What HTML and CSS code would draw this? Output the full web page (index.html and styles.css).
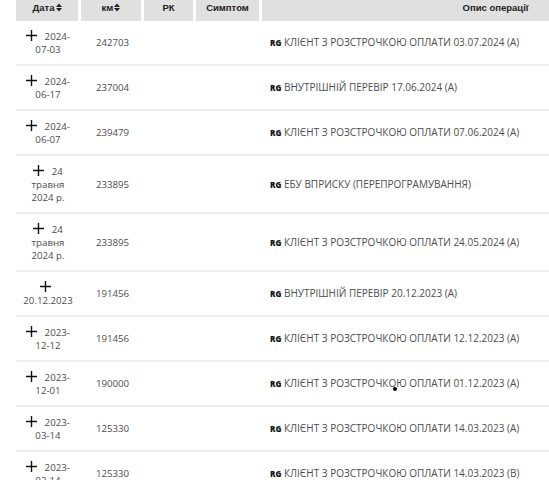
FILE: index.html
```html
<!DOCTYPE html>
<html lang="uk">
<head>
<meta charset="utf-8">
<link rel="stylesheet" href="styles.css">
</head>
<body>
<table class="log">
  <colgroup>
    <col class="w-date"><col class="w-km"><col class="w-rk"><col class="w-sym"><col class="w-desc">
  </colgroup>
  <thead>
    <tr>
      <th>Дата<svg class="sort" viewBox="0 0 6 9" width="6" height="9"><path d="M0 4 3 0.5 6 4Z M0 5 6 5 3 8.5Z"/></svg></th>
      <th>км<svg class="sort" viewBox="0 0 6 9" width="6" height="9"><path d="M0 4 3 0.5 6 4Z M0 5 6 5 3 8.5Z"/></svg></th>
      <th>РК</th>
      <th>Симптом</th>
      <th>Опис операції</th>
    </tr>
  </thead>
  <tbody>
    <tr>
      <td class="date"><svg class="plus" viewBox="0 0 11 11" width="11" height="11"><path d="M5.5 0V11M0 5.5H11"/></svg> 2024-<wbr>07-03</td>
      <td class="km">242703</td><td></td><td></td>
      <td class="desc"><b>RG</b> КЛІЄНТ З РОЗСТРОЧКОЮ ОПЛАТИ 03.07.2024 (А)</td>
    </tr>
    <tr>
      <td class="date"><svg class="plus" viewBox="0 0 11 11" width="11" height="11"><path d="M5.5 0V11M0 5.5H11"/></svg> 2024-<wbr>06-17</td>
      <td class="km">237004</td><td></td><td></td>
      <td class="desc"><b>RG</b> ВНУТРІШНІЙ ПЕРЕВІР 17.06.2024 (А)</td>
    </tr>
    <tr>
      <td class="date"><svg class="plus" viewBox="0 0 11 11" width="11" height="11"><path d="M5.5 0V11M0 5.5H11"/></svg> 2024-<wbr>06-07</td>
      <td class="km">239479</td><td></td><td></td>
      <td class="desc"><b>RG</b> КЛІЄНТ З РОЗСТРОЧКОЮ ОПЛАТИ 07.06.2024 (А)</td>
    </tr>
    <tr>
      <td class="date"><svg class="plus" viewBox="0 0 11 11" width="11" height="11"><path d="M5.5 0V11M0 5.5H11"/></svg> 24 травня 2024&nbsp;р.</td>
      <td class="km">233895</td><td></td><td></td>
      <td class="desc"><b>RG</b> ЕБУ ВПРИСКУ (ПЕРЕПРОГРАМУВАННЯ)</td>
    </tr>
    <tr>
      <td class="date"><svg class="plus" viewBox="0 0 11 11" width="11" height="11"><path d="M5.5 0V11M0 5.5H11"/></svg> 24 травня 2024&nbsp;р.</td>
      <td class="km">233895</td><td></td><td></td>
      <td class="desc"><b>RG</b> КЛІЄНТ З РОЗСТРОЧКОЮ ОПЛАТИ 24.05.2024 (А)</td>
    </tr>
    <tr>
      <td class="date"><svg class="plus" viewBox="0 0 11 11" width="11" height="11"><path d="M5.5 0V11M0 5.5H11"/></svg> 20.12.2023</td>
      <td class="km">191456</td><td></td><td></td>
      <td class="desc"><b>RG</b> ВНУТРІШНІЙ ПЕРЕВІР 20.12.2023 (А)</td>
    </tr>
    <tr>
      <td class="date"><svg class="plus" viewBox="0 0 11 11" width="11" height="11"><path d="M5.5 0V11M0 5.5H11"/></svg> 2023-<wbr>12-12</td>
      <td class="km">191456</td><td></td><td></td>
      <td class="desc"><b>RG</b> КЛІЄНТ З РОЗСТРОЧКОЮ ОПЛАТИ 12.12.2023 (А)</td>
    </tr>
    <tr>
      <td class="date"><svg class="plus" viewBox="0 0 11 11" width="11" height="11"><path d="M5.5 0V11M0 5.5H11"/></svg> 2023-<wbr>12-01</td>
      <td class="km">190000</td><td></td><td></td>
      <td class="desc"><b>RG</b> КЛІЄНТ З РОЗСТРОЧКОЮ ОПЛАТИ 01.12.2023 (А)</td>
    </tr>
    <tr>
      <td class="date"><svg class="plus" viewBox="0 0 11 11" width="11" height="11"><path d="M5.5 0V11M0 5.5H11"/></svg> 2023-<wbr>03-14</td>
      <td class="km">125330</td><td></td><td></td>
      <td class="desc"><b>RG</b> КЛІЄНТ З РОЗСТРОЧКОЮ ОПЛАТИ 14.03.2023 (А)</td>
    </tr>
    <tr>
      <td class="date"><svg class="plus" viewBox="0 0 11 11" width="11" height="11"><path d="M5.5 0V11M0 5.5H11"/></svg> 2023-<wbr>03-14</td>
      <td class="km">125330</td><td></td><td></td>
      <td class="desc"><b>RG</b> КЛІЄНТ З РОЗСТРОЧКОЮ ОПЛАТИ 14.03.2023 (В)</td>
    </tr>
  </tbody>
</table>
<div class="cursor-dot"></div>
</body>
</html>
```
FILE: styles.css
```css
html {
  overflow: hidden;
}
body {
  margin: 0;
  padding-left: 16px;
  background: #fff;
  font-family: "Open Sans", "Noto Sans", sans-serif;
  position: relative;
}
.log {
  border-collapse: separate;
  border-spacing: 0;
  table-layout: fixed;
  width: 716px;
}
.w-date { width: 65px; }
.w-km { width: 63px; }
.w-rk { width: 52px; }
.w-sym { width: 66px; }
.w-desc { width: 470px; }

.log th {
  background: #e0e0e0;
  border-right: 3px solid #fff;
  height: 21px;
  box-sizing: border-box;
  padding: 2px 0 0;
  vertical-align: top;
  text-align: center;
  font-family: "Liberation Sans", Arial, sans-serif;
  font-weight: bold;
  font-size: 9.5px;
  line-height: 11px;
  color: #222;
}
.sort {
  fill: #222;
  margin-left: 1px;
  vertical-align: -1px;
}
.log td {
  border-bottom: 2px solid #eeeeee;
  padding: 8.5px 5px;
  line-height: 13px;
  font-size: 9.7px;
  color: #4d4d4d;
  vertical-align: middle;
}
.log td.date {
  text-align: center;
  padding: 8.5px 6px 8.5px 5px;
}
.plus {
  stroke: #111;
  stroke-width: 1.4;
  fill: none;
  margin-right: 5px;
  vertical-align: -1px;
}
.log td.km {
  text-align: center;
}
.log td.desc {
  padding-left: 8px;
  white-space: nowrap;
  font-size: 10px;
}
.desc b {
  color: #111;
  font-weight: 800;
  font-size: 8px;
}
.cursor-dot {
  position: absolute;
  left: 393px;
  top: 387px;
  width: 4px;
  height: 4px;
  border-radius: 50%;
  background: #000;
}
```
